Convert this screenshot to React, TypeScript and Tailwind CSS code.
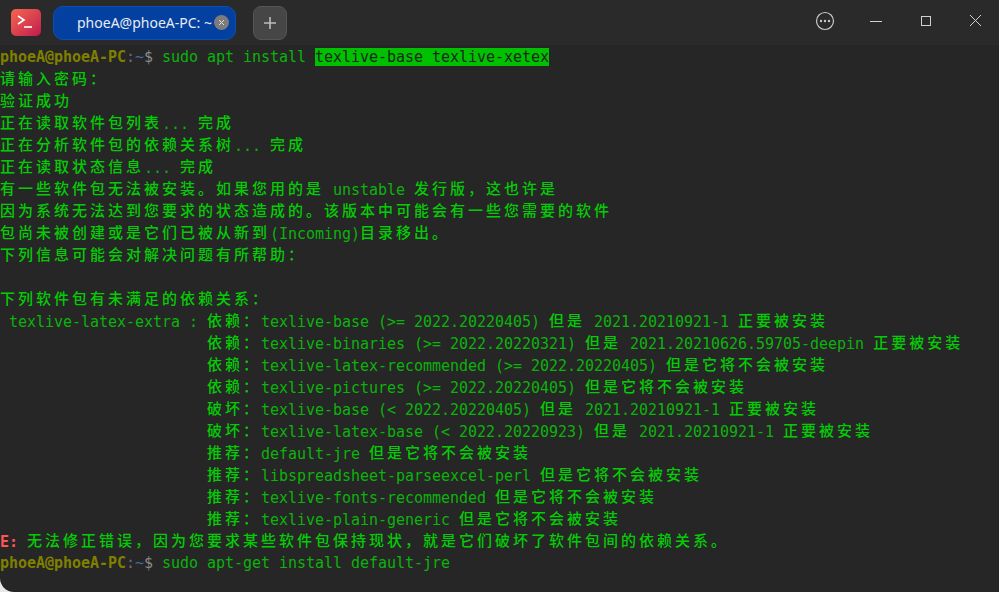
import React from 'react';

const isCjk = (c: string) => /[\u3000-\u9fff\uff00-\uffef]/.test(c);

// splits a string into runs so the CJK chars sit on the 2-cell terminal grid
const Txt = ({ t, cls = 'text-[#0bb30b]' }: { t: string; cls?: string }) => {
  const runs = t.match(/[\u3000-\u9fff\uff00-\uffef]+|[^\u3000-\u9fff\uff00-\uffef]+/g) || [];
  return (
    <>
      {runs.map((r, i) =>
        isCjk(r[0]) ? (
          <span key={i} className="font-['Noto_Sans_CJK_SC'] font-medium text-[15px] tracking-[3px] text-[#04cc04] relative top-[-1px]">
            {r}
          </span>
        ) : (
          <span key={i} className={cls}>
            {r}
          </span>
        )
      )}
    </>
  );
};

const Prompt = () => (
  <>
    <span className="font-bold text-[#808000]">phoeA@phoeA-PC</span>
    <span className="text-[#6d6d6d]">:</span>
    <span className="text-[#3b6ea5]">~</span>
    <span className="text-[#8a8a8a]">$ </span>
  </>
);

const Line = ({ children }: { children?: React.ReactNode }) => (
  <div className="h-[22px] leading-[22px] whitespace-pre">{children}</div>
);

const indent = '                       ';

const lines = [
  '请输入密码：',
  '验证成功',
  '正在读取软件包列表... 完成',
  '正在分析软件包的依赖关系树... 完成',
  '正在读取状态信息... 完成',
  '有一些软件包无法被安装。如果您用的是 unstable 发行版，这也许是',
  '因为系统无法达到您要求的状态造成的。该版本中可能会有一些您需要的软件',
  '包尚未被创建或是它们已被从新到(Incoming)目录移出。',
  '下列信息可能会对解决问题有所帮助：',
  '',
  '下列软件包有未满足的依赖关系：',
  ' texlive-latex-extra : 依赖：texlive-base (>= 2022.20220405) 但是 2021.20210921-1 正要被安装',
  indent + '依赖：texlive-binaries (>= 2022.20220321) 但是 2021.20210626.59705-deepin 正要被安装',
  indent + '依赖：texlive-latex-recommended (>= 2022.20220405) 但是它将不会被安装',
  indent + '依赖：texlive-pictures (>= 2022.20220405) 但是它将不会被安装',
  indent + '破坏：texlive-base (< 2022.20220405) 但是 2021.20210921-1 正要被安装',
  indent + '破坏：texlive-latex-base (< 2022.20220923) 但是 2021.20210921-1 正要被安装',
  indent + '推荐：default-jre 但是它将不会被安装',
  indent + '推荐：libspreadsheet-parseexcel-perl 但是它将不会被安装',
  indent + '推荐：texlive-fonts-recommended 但是它将不会被安装',
  indent + '推荐：texlive-plain-generic 但是它将不会被安装',
];

const App: React.FC = () => {
  return (
    <div className="w-[999px] h-[592px] overflow-hidden bg-[#e8e8e8]">
      <div className="w-full h-full bg-[#262626] rounded-bl-[14px] flex flex-col font-['DejaVu_Sans_Mono',monospace] text-[15px] tracking-[-0.03px]">
        {/* Title bar */}
        <div className="h-[45px] shrink-0 bg-[#2a2a2a] flex items-center font-['Noto_Sans',sans-serif] tracking-normal">
          <div className="ml-[11px] w-[30px] h-[27px] rounded-[5px] bg-gradient-to-br from-[#f4644c] to-[#c2134e] flex items-center justify-center">
            <svg width="22" height="18" viewBox="0 0 22 18" fill="none" stroke="white" strokeWidth="1.6">
              <path d="M3 2l6 4-6 4" />
              <path d="M9 13h8" />
            </svg>
          </div>
          <div className="ml-[12px] w-[183px] h-[34px] rounded-[10px] bg-[#04409f] border border-[#0a4fb5] flex items-center pl-[23px] text-[14px] text-[#e6ecf5] relative whitespace-nowrap">
            phoeA@phoeA-PC: ~
            <span className="absolute right-[6px] top-[8px] w-[15px] h-[15px] rounded-full bg-[#7c7c7c] flex items-center justify-center">
              <svg width="7" height="7" viewBox="0 0 7 7" stroke="#e0e0e0" strokeWidth="1">
                <path d="M1 1l5 5M6 1l-5 5" />
              </svg>
            </span>
          </div>
          <div className="ml-[17px] w-[34px] h-[34px] rounded-[8px] bg-[#464646] border border-[#555] flex items-center justify-center">
            <svg width="14" height="14" viewBox="0 0 14 14" stroke="#bdbdbd" strokeWidth="1.6">
              <path d="M7 1v12M1 7h12" />
            </svg>
          </div>
          <div className="ml-auto flex items-center text-[#d0d0d0] -mt-[4px]">
            <svg width="20" height="20" viewBox="0 0 20 20" fill="none" stroke="#c8c8c8" className="mr-[35px]">
              <circle cx="10" cy="10" r="8.5" strokeWidth="1.2" />
              <circle cx="6" cy="10" r="1.2" fill="#c8c8c8" stroke="none" />
              <circle cx="10" cy="10" r="1.2" fill="#c8c8c8" stroke="none" />
              <circle cx="14" cy="10" r="1.2" fill="#c8c8c8" stroke="none" />
            </svg>
            <svg width="12" height="12" viewBox="0 0 12 12" stroke="#d0d0d0" className="mr-[38px]">
              <path d="M0 6.5h12" />
            </svg>
            <svg width="12" height="12" viewBox="0 0 12 12" fill="none" stroke="#d0d0d0" className="mr-[37px]">
              <rect x="1.5" y="1.5" width="9" height="9" />
            </svg>
            <svg width="13" height="13" viewBox="0 0 13 13" stroke="#d0d0d0" className="mr-[17px]">
              <path d="M1 1l11 11M12 1L1 12" />
            </svg>
          </div>
        </div>
        {/* Terminal output */}
        <div className="pt-[1px]">
          <Line>
            <Prompt />
            <Txt t="sudo apt install " />
            <span className="bg-[#00c000] text-[#1c2a1c]">texlive-base texlive-xetex</span>
          </Line>
          {lines.map((l, i) => (
            <Line key={i}>
              <Txt t={l} />
            </Line>
          ))}
          <Line>
            <span className="font-bold text-[#ff5555]">E: </span>
            <Txt t="无法修正错误，因为您要求某些软件包保持现状，就是它们破坏了软件包间的依赖关系。" />
          </Line>
          <Line>
            <Prompt />
            <Txt t="sudo apt-get install default-jre" />
          </Line>
        </div>
      </div>
    </div>
  );
};

export default App;
